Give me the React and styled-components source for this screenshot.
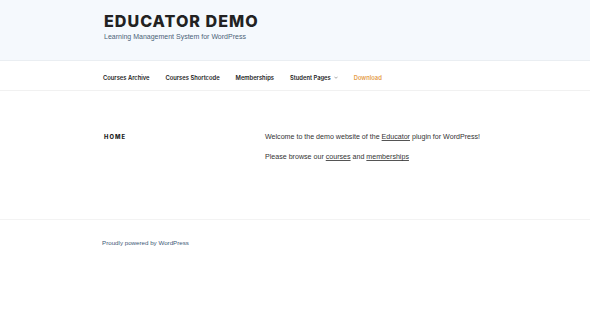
import React from "react";
import styled, { createGlobalStyle } from "styled-components";

const Global = createGlobalStyle`
  html, body { margin: 0; padding: 0; background: #fff; }
  body { font-family: "Liberation Sans", Arial, sans-serif; color: #333; }
`;

const Header = styled.header`
  background: #f5f9fd;
  height: 61px;
  border-bottom: 1px solid #eaeef2;
  box-sizing: border-box;
  padding: 12px 0 0 104px;
`;

const Title = styled.h1`
  margin: 0;
  font-family: Inter, "Liberation Sans", sans-serif;
  font-weight: 800;
  font-size: 16.1px;
  line-height: 18px;
  letter-spacing: 1px;
  color: #222;
  text-transform: uppercase;
`;

const Tagline = styled.p`
  margin: 3px 0 0;
  font-size: 7px;
  color: #4b6378;
`;

const Nav = styled.nav`
  height: 30px;
  border-bottom: 1px solid #f1f1f1;
  display: flex;
  align-items: center;
  gap: 16px;
  padding: 4px 0 0 103px;
  box-sizing: border-box;
`;

const NavItem = styled.a`
  font-family: Inter, "Liberation Sans", sans-serif;
  font-size: 5.8px;
  font-weight: 600;
  color: ${(p) => (p.$accent ? "#e59b48" : "#222")};
  text-decoration: none;
  display: flex;
  align-items: center;
  gap: 3px;
`;

const Main = styled.main`
  display: grid;
  grid-template-columns: 161px 1fr;
  padding: 41px 0 0 104px;
  height: 129px;
  box-sizing: border-box;
  border-bottom: 1px solid #f3f3f3;
`;

const PageTitle = styled.h2`
  margin: 0;
  font-family: Inter, "Liberation Sans", sans-serif;
  font-size: 5.8px;
  font-weight: 800;
  letter-spacing: 1.1px;
  color: #222;
  line-height: 10px;
`;

const Content = styled.div`
  display: flex;
  flex-direction: column;
  gap: 10px;
`;

const Para = styled.p`
  margin: 0;
  font-size: 7.1px;
  line-height: 10px;
  color: #333;
`;

const Link = styled.a`
  color: #333;
  text-decoration: underline;
  text-decoration-color: #555;
  text-underline-offset: 1px;
`;

const Footer = styled.footer`
  padding: 15px 0 0 102px;
  line-height: 10px;
`;

const FooterLink = styled.a`
  font-size: 6.2px;
  color: #3d5a77;
  text-decoration: none;
`;

const Chevron = () => (
  <svg width="4" height="3" viewBox="0 0 10 6" fill="none" stroke="#777" strokeWidth="1.6">
    <path d="M1 1l4 4 4-4" />
  </svg>
);

export default function App() {
  return (
    <>
      <Global />
      <Header>
        <Title>Educator Demo</Title>
        <Tagline>Learning Management System for WordPress</Tagline>
      </Header>
      <Nav>
        <NavItem>Courses Archive</NavItem>
        <NavItem>Courses Shortcode</NavItem>
        <NavItem>Memberships</NavItem>
        <NavItem>
          Student Pages <Chevron />
        </NavItem>
        <NavItem $accent>Download</NavItem>
      </Nav>
      <Main>
        <PageTitle>HOME</PageTitle>
        <Content>
          <Para>
            Welcome to the demo website of the <Link>Educator</Link> plugin for WordPress!
          </Para>
          <Para>
            Please browse our <Link>courses</Link> and <Link>memberships</Link>
          </Para>
        </Content>
      </Main>
      <Footer>
        <FooterLink>Proudly powered by WordPress</FooterLink>
      </Footer>
    </>
  );
}
